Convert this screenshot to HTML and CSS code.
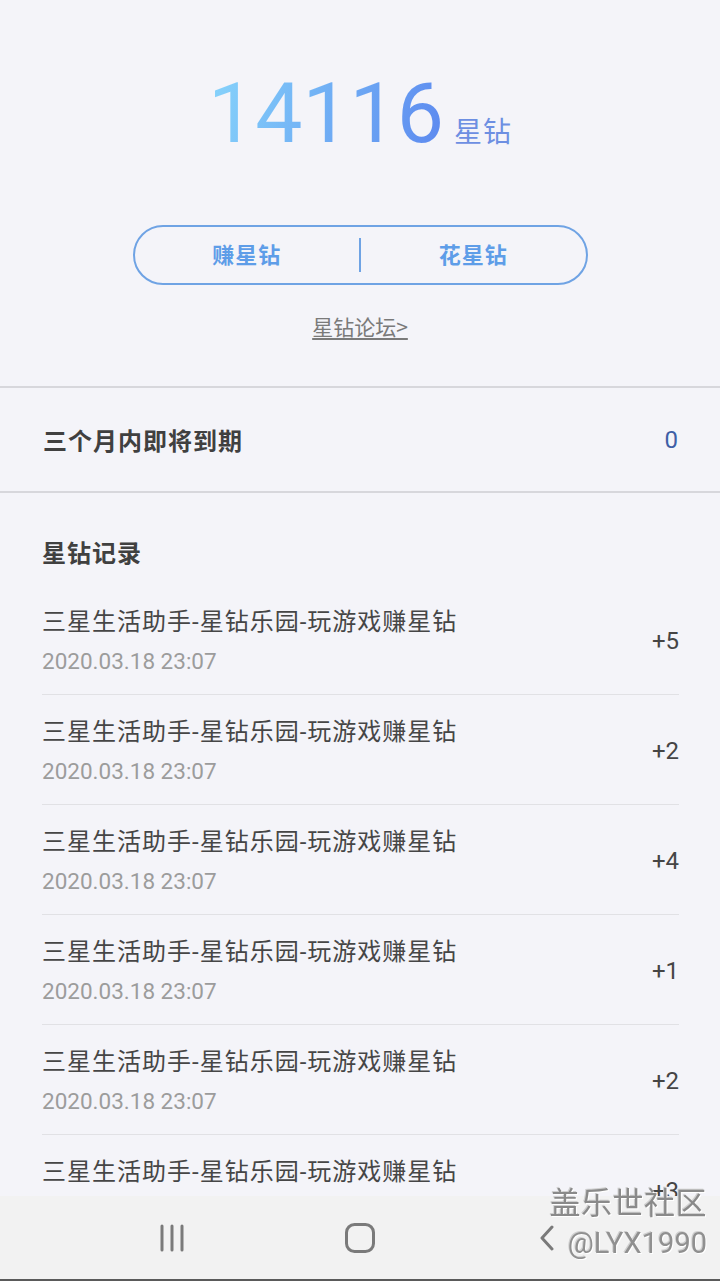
FILE: index.html
```html
<!DOCTYPE html>
<html lang="zh-CN">
<head>
<meta charset="utf-8">
<title>星钻</title>
<link rel="stylesheet" href="styles.css">
</head>
<body>
<div class="page">
  <section class="summary">
    <div class="balance"><span class="amount">14116</span><span class="unit">星钻</span></div>
    <div class="actions">
      <a class="action">赚星钻</a>
      <span class="divider"></span>
      <a class="action">花星钻</a>
    </div>
    <a class="forum">星钻论坛&gt;</a>
  </section>

  <section class="expiry">
    <span class="expiry-label">三个月内即将到期</span>
    <span class="expiry-value">0</span>
  </section>

  <section class="records">
    <h2 class="records-title">星钻记录</h2>
    <ul class="record-list">
      <li class="record">
        <div class="record-info"><div class="record-name">三星生活助手-星钻乐园-玩游戏赚星钻</div><div class="record-date">2020.03.18 23:07</div></div>
        <span class="record-amount">+5</span>
      </li>
      <li class="record">
        <div class="record-info"><div class="record-name">三星生活助手-星钻乐园-玩游戏赚星钻</div><div class="record-date">2020.03.18 23:07</div></div>
        <span class="record-amount">+2</span>
      </li>
      <li class="record">
        <div class="record-info"><div class="record-name">三星生活助手-星钻乐园-玩游戏赚星钻</div><div class="record-date">2020.03.18 23:07</div></div>
        <span class="record-amount">+4</span>
      </li>
      <li class="record">
        <div class="record-info"><div class="record-name">三星生活助手-星钻乐园-玩游戏赚星钻</div><div class="record-date">2020.03.18 23:07</div></div>
        <span class="record-amount">+1</span>
      </li>
      <li class="record">
        <div class="record-info"><div class="record-name">三星生活助手-星钻乐园-玩游戏赚星钻</div><div class="record-date">2020.03.18 23:07</div></div>
        <span class="record-amount">+2</span>
      </li>
      <li class="record">
        <div class="record-info"><div class="record-name">三星生活助手-星钻乐园-玩游戏赚星钻</div><div class="record-date">2020.03.18 23:07</div></div>
        <span class="record-amount">+3</span>
      </li>
    </ul>
  </section>
</div>

<nav class="navbar">
  <span class="nav-item">
    <svg width="28" height="28" viewBox="0 0 28 28"><g stroke="#7a7a7a" stroke-width="3" stroke-linecap="round"><line x1="3" y1="2" x2="3" y2="26"/><line x1="13" y1="2" x2="13" y2="26"/><line x1="23" y1="2" x2="23" y2="26"/></g></svg>
  </span>
  <span class="nav-item">
    <svg width="30" height="30" viewBox="0 0 30 30"><rect x="1.5" y="1.5" width="27" height="27" rx="8" fill="none" stroke="#7a7a7a" stroke-width="3"/></svg>
  </span>
  <span class="nav-item">
    <svg width="18" height="26" viewBox="0 0 18 26"><polyline points="14,2 4,13 14,24" fill="none" stroke="#7a7a7a" stroke-width="3" stroke-linecap="round" stroke-linejoin="round"/></svg>
  </span>
</nav>

<div class="watermark">
  <div class="wm-title">盖乐世社区</div>
  <div class="wm-user">@LYX1990</div>
</div>
</body>
</html>
```
FILE: styles.css
```css
* { box-sizing: border-box; }

html, body {
  margin: 0;
  padding: 0;
  background: #f4f4f9;
}

body {
  font-family: "Roboto", "Noto Sans CJK SC", sans-serif;
  color: #444;
}

.summary {
  padding: 72px 0 46px;
  border-bottom: 2px solid #d7d7dc;
  display: flex;
  flex-direction: column;
  align-items: center;
}

.balance {
  display: flex;
  align-items: baseline;
  justify-content: center;
  gap: 10px;
  height: 84px;
}

.amount {
  font-size: 84px;
  line-height: 84px;
  font-weight: 400;
  background: linear-gradient(105deg, #87d4fb 0%, #72b2f5 45%, #5c88ef 100%);
  -webkit-background-clip: text;
  background-clip: text;
  color: transparent;
}

.unit {
  font-family: "Noto Sans CJK SC", sans-serif;
  font-size: 28px;
  line-height: 28px;
  letter-spacing: 1px;
  color: #6d8fe2;
}

.actions {
  margin-top: 69px;
  width: 455px;
  height: 60px;
  border: 2px solid #6fa3e4;
  border-radius: 30px;
  display: flex;
  align-items: center;
}

.action {
  flex: 1;
  text-align: center;
  padding-bottom: 5px;
  font-family: "Noto Sans CJK SC", sans-serif;
  font-size: 22px;
  line-height: 30px;
  font-weight: 700;
  letter-spacing: 1px;
  color: #5e9de8;
}

.divider {
  width: 2px;
  height: 34px;
  background: #6fa3e4;
}

.forum {
  margin-top: 27px;
  font-family: "Noto Sans CJK SC", sans-serif;
  font-size: 21px;
  line-height: 28px;
  color: #7a7a7a;
  text-decoration: underline;
  text-underline-offset: 3px;
}

.expiry {
  height: 105px;
  padding: 0 42px 0 43px;
  border-bottom: 2px solid #d7d7dc;
  display: flex;
  align-items: center;
  justify-content: space-between;
}

.expiry-label {
  font-family: "Noto Sans CJK SC", sans-serif;
  font-size: 24px;
  font-weight: 700;
  letter-spacing: 1px;
  color: #404040;
}

.expiry-value {
  font-size: 24px;
  color: #3e5fa6;
}

.records {
  padding: 0 41px 0 42px;
}

.records-title {
  margin: 44px 0 18px;
  font-family: "Noto Sans CJK SC", sans-serif;
  font-size: 24px;
  line-height: 30px;
  font-weight: 700;
  letter-spacing: 1px;
  color: #404040;
}

.record-list {
  list-style: none;
  margin: 0;
  padding: 0;
}

.record {
  display: flex;
  align-items: center;
  justify-content: space-between;
  padding: 20px 0 19px;
  border-bottom: 1px solid #e1e1e5;
}

.record:first-child {
  padding-top: 21px;
}

.record + .record {
  padding-top: 21px;
}

.record-name {
  font-size: 24px;
  line-height: 32px;
  letter-spacing: 1px;
  color: #464646;
}

.record-date {
  margin-top: 9px;
  font-size: 22.5px;
  line-height: 28px;
  color: #9c9c9c;
}

.record-amount {
  font-size: 24px;
  color: #454545;
}

.navbar {
  position: fixed;
  left: 0;
  right: 0;
  bottom: 0;
  height: 85px;
  background: #f2f2f2;
  border-bottom: 2px solid #5a5a5a;
  display: grid;
  grid-template-columns: repeat(3, 187px);
  justify-content: center;
  align-items: center;
}

.nav-item {
  display: flex;
  justify-content: center;
  align-items: center;
}

.nav-item svg { display: block; }

.watermark {
  position: fixed;
  right: 13px;
  bottom: 22px;
  text-align: right;
  color: #8a8a8a;
  text-shadow: 1px 1px 0 #ffffff, -1px -1px 0 #cfcfcf;
}

.wm-title {
  font-family: "Noto Sans CJK SC", sans-serif;
  font-size: 31px;
  line-height: 36px;
  letter-spacing: 0.5px;
}

.wm-user {
  margin-top: 8px;
  font-family: "Roboto", sans-serif;
  font-size: 29px;
  line-height: 32px;
  color: #909090;
}
```
